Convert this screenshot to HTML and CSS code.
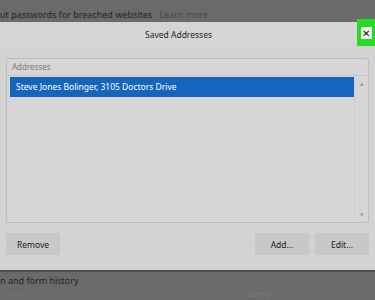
FILE: index.html
```html
<!DOCTYPE html>
<html lang="en">
<head>
    <meta charset="UTF-8">
    <meta name="viewport" content="width=device-width, initial-scale=1.0">
    <title>Saved Addresses</title>
    <link rel="stylesheet" href="styles.css">
</head>
<body>
    <div class="page-top">
        <span>ut passwords for breached websites</span>
        <a href="#" class="learn">Learn more</a>
    </div>

    <div class="dialog">
        <div class="titlebar">
            <span class="title">Saved Addresses</span>
            <div class="close-hl">
                <span class="close-x">&#10005;</span>
            </div>
        </div>
        <div class="body">
            <div class="listbox">
                <div class="list-head">Addresses</div>
                <div class="list-rows">
                    <div class="row selected">Steve Jones Bolinger, 3105 Doctors Drive</div>
                    <div class="scroll">
                        <span class="sarrow">&#9652;</span>
                        <span class="sarrow">&#9662;</span>
                    </div>
                </div>
            </div>
            <div class="buttons">
                <button class="btn">Remove</button>
                <span class="spacer"></span>
                <button class="btn">Add...</button>
                <button class="btn">Edit...</button>
            </div>
        </div>
    </div>

    <div class="page-bottom">
        <div>n and form history</div>
        <div class="faded">
            <span>Exit</span>
            <span class="right">Settings</span>
        </div>
    </div>
</body>
</html>
```

FILE: styles.css
```css
body {
    margin: 0;
    width: 375px;
    height: 300px;
    overflow: hidden;
    background: #6a6a6a;
    font-family: "Noto Sans", "Open Sans", sans-serif;
    font-size: 9px;
}
.page-top {
    height: 22px;
    display: flex;
    align-items: flex-end;
    gap: 7px;
    color: #262626;
    font-size: 9px;
    white-space: nowrap;
    box-sizing: border-box;
    padding-bottom: 1px;
}
.page-top .learn {
    color: #3c4a5e;
    text-decoration: none;
}
.dialog {
    height: 248px;
    background: #d3d3d3;
    display: flex;
    flex-direction: column;
}
.titlebar {
    height: 24px;
    display: flex;
    align-items: center;
    justify-content: center;
    position: relative;
    background: #d5d5d5;
    padding-right: 18px;
}
.title {
    color: #1e1e1e;
    font-size: 8.5px;
}
.close-hl {
    position: absolute;
    right: 0;
    top: -3px;
    width: 18px;
    height: 27px;
    background: #22dd22;
    display: flex;
    align-items: center;
    justify-content: center;
}
.close-x {
    background: #f2f2f2;
    color: #111;
    font-size: 10px;
    width: 11px;
    height: 12px;
    line-height: 12px;
    text-align: center;
}
.body {
    flex: 1;
    padding: 12px 6px 15px 6px;
    display: flex;
    flex-direction: column;
}
.listbox {
    height: 163px;
    border: 1px solid #bdbdbd;
    border-radius: 2px;
    background: #d6d6d6;
    display: flex;
    flex-direction: column;
}
.list-head {
    height: 16px;
    line-height: 16px;
    padding-left: 5px;
    color: #7a7a7a;
    font-size: 8px;
    border-bottom: 1px solid #c8c8c8;
}
.list-rows {
    flex: 1;
    display: flex;
    padding: 1px 0 2px 3px;
}
.row {
    flex: 1;
    align-self: flex-start;
    height: 20px;
    line-height: 20px;
    padding-left: 6px;
    font-size: 8.5px;
    color: #fff;
}
.row.selected {
    background: #1565bd;
}
.scroll {
    width: 13px;
    display: flex;
    flex-direction: column;
    justify-content: space-between;
    align-items: center;
    padding: 3px 0 2px;
    border-left: 1px solid #cfcfcf;
}
.sarrow {
    color: #9a9a9a;
    font-size: 7px;
    line-height: 7px;
}
.buttons {
    display: flex;
    gap: 6px;
    margin-top: 10px;
}
.spacer {
    flex: 1;
}
.btn {
    width: 54px;
    height: 22px;
    border: none;
    background: #c8c8c8;
    color: #1a1a1a;
    font-family: "Noto Sans", "Open Sans", sans-serif;
    font-size: 8.5px;
    padding: 0;
}
.page-bottom {
    border-top: 2px solid #4e4e4e;
    color: #262626;
    font-size: 9px;
    padding-top: 3px;
    line-height: 12px;
}
.faded {
    display: flex;
    padding-left: 10px;
    margin-top: 4px;
    color: #7a7a7a;
    font-size: 7px;
    line-height: 8px;
}
.faded .right {
    margin-left: 225px;
}
```
